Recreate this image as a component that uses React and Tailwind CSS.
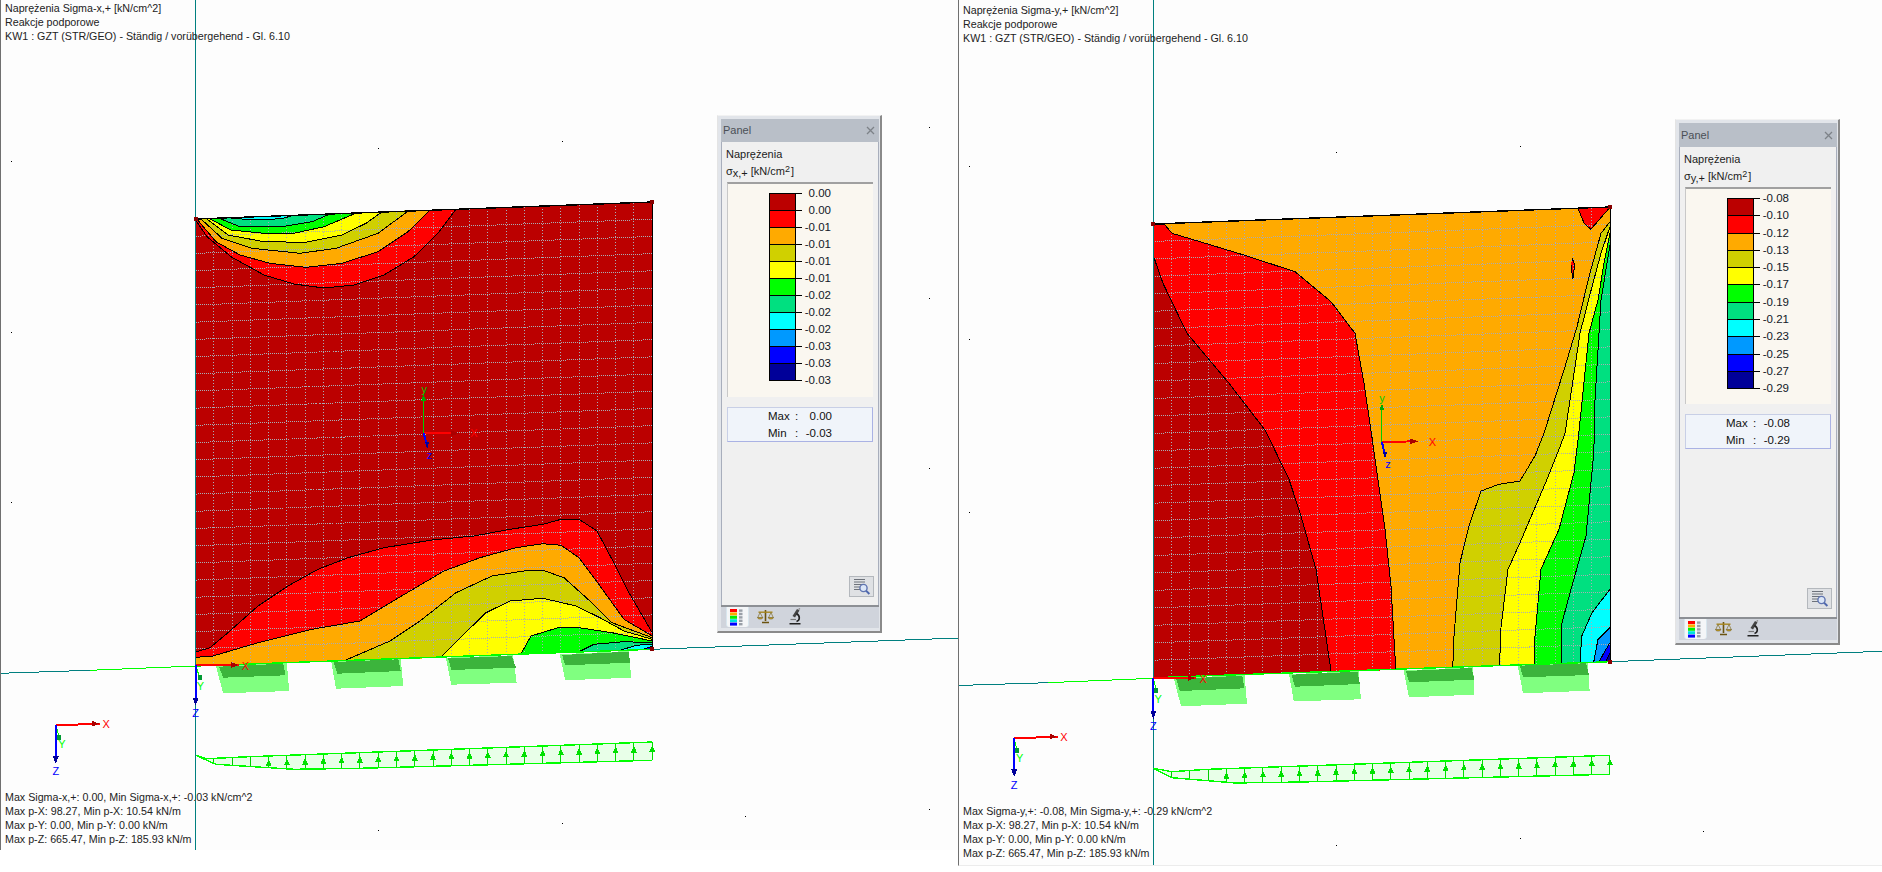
import React from "react";

const C = { dr: "#bb0000", r: "#ff0000", o: "#ffaa00", ol: "#d0d000", y: "#ffff00", g: "#00ff00", s: "#00e080", c: "#00ffff", a: "#0099ff", b: "#0000ff", n: "#000099" };
const H = 1308;
const low = (a) => a.map(([x, y]) => [x, y + H]);

const LEFT = {
  dx: 0,
  plate: [[326, 657], [1087, 606], [1087, 640 + H], [326, 690 + H]],
  base: C.dr,
  regions: [
    { f: C.r, pts: [[326, 660], [345, 710], [385, 770], [440, 825], [490, 852], [540, 864], [590, 855], [640, 825], [690, 770], [730, 700], [760, 628]] },
    { f: C.o, pts: [[328, 657], [360, 725], [400, 765], [450, 790], [510, 802], [570, 790], [630, 755], [680, 695], [716, 632]] },
    { f: C.ol, pts: [[335, 657], [370, 715], [420, 745], [500, 760], [560, 745], [630, 700], [682, 631]] },
    { f: C.y, pts: [[345, 657], [380, 705], [440, 725], [510, 727], [570, 705], [610, 670], [638, 634]] },
    { f: C.g, pts: [[350, 657], [385, 690], [440, 700], [490, 700], [540, 680], [595, 638]] },
    { f: C.s, pts: [[367, 656], [400, 680], [470, 680], [520, 665], [550, 642]] },
    { f: C.c, pts: [[385, 654], [420, 660], [470, 656], [490, 645]] },
    { f: C.r, close: [[1087, 640 + H], [326, 690 + H]], pts: low([[326, 648], [350, 635], [380, 590], [430, 510], [480, 450], [530, 400], [580, 365], [640, 335], [720, 312], [790, 300], [850, 280], [905, 265], [935, 250], [965, 250], [995, 285], [1020, 370], [1045, 460], [1087, 590]]) },
    { f: C.o, close: [[1087, 640 + H], [326, 690 + H]], pts: low([[326, 664], [355, 660], [430, 620], [520, 580], [600, 555], [660, 490], [740, 405], [800, 365], [860, 335], [905, 323], [935, 328], [965, 365], [1000, 450], [1040, 550], [1087, 600]]) },
    { f: C.ol, close: [[1087, 640 + H]], pts: low([[570, 677], [650, 615], [700, 555], [760, 470], [820, 420], [880, 403], [905, 403], [940, 425], [980, 490], [1020, 560], [1087, 605]]) },
    { f: C.y, close: [[1087, 640 + H]], pts: low([[735, 664], [770, 600], [810, 530], [850, 495], [905, 487], [960, 510], [1000, 545], [1040, 585], [1087, 610]]) },
    { f: C.g, close: [[1087, 640 + H]], pts: low([[868, 655], [885, 600], [930, 575], [965, 575], [1020, 590], [1087, 615]]) },
    { f: C.s, close: [[1087, 640 + H]], pts: low([[962, 650], [990, 625], [1040, 617], [1087, 620]]) },
    { f: C.c, close: [[1087, 640 + H]], pts: low([[1030, 645], [1060, 628], [1087, 624]]) },
    { f: C.b, close: [[1087, 640 + H]], pts: low([[1070, 642], [1087, 630]]) },
  ],
  boxes: low([
    [[360, 690], [478, 680], [482, 765], [372, 772], [365, 725]],
    [[552, 677], [668, 668], [672, 750], [560, 758]],
    [[743, 665], [855, 658], [861, 740], [752, 746]],
    [[933, 655], [1048, 645], [1052, 725], [942, 733]],
  ].flat()),
  boxSizes: [5, 4, 4, 4],
  tops: low([
    [[365, 692], [472, 683], [476, 718], [372, 725]],
    [[556, 678], [664, 670], [668, 705], [562, 713]],
    [[747, 667], [853, 660], [860, 695], [752, 702]],
    [[937, 657], [1048, 647], [1050, 680], [942, 688]],
  ].flat()),
  topSizes: [4, 4, 4, 4],
  strip: { top: [[326, 958], [345, 968], [415, 962], [1087, 918]], bot: [[326, 958], [360, 985], [490, 1000], [600, 997], [1087, 973]], arrowStart: 447 },
  dots: [[18, 484], [630, 444], [937, 424], [1549, 382], [1549, 895], [18, 997], [18, 198 + H], [1549, 97 + H], [1549, 1120 + H], [1242, 1140 + H], [937, 1162 + H], [630, 1183 + H]],
  center: [[706, 1300], [760, 1300], [706, 1197], [712, H + 30], [790, 1300], [707, 1167], [716, H + 58]],
  corner: { o: [326, H + 688], x: [392, H + 687], xl: [409, H + 690], y: [333, H + 725], yl: [334, H + 750], z: [326, H + 800], zl: [326, H + 832] },
  tri: { o: [93, H + 868], x: [160, H + 863], xl: [177, H + 863], y: [99, H + 905], yl: [103, H + 925], z: [93, H + 975], zl: [93, H + 1006] },
  teal: [[0, H + 712], [150, H + 703]],
  green: [[150, H + 703], [326, H + 690]],
  tealR: [[1087, H + 640], [1600, H + 606]],
  axisEnd: 850,
};

const RIGHT = {
  dx: 958,
  plate: [[354, 672], [1115, 621], [1115, 677 + H], [354, 725 + H]],
  base: C.o,
  regions: [
    { f: C.dr, close: [[354, 725 + H]], pts: [[354, 768], [370, 850], [410, 1000], [480, 1150], [540, 1290], [545, H], [580, H + 130], [600, H + 240], [625, H + 400], [650, H + 705]] },
  ],
  regionsUnder: [
    { f: C.r, close: [[354, 725 + H]], pts: [[354, 672], [372, 672], [385, 700], [450, 735], [510, 768], [590, 815], [650, 905], [690, 1000], [705, 1150], [718, H], [740, H + 280], [750, H + 450], [758, H + 702]] },
  ],
  regionsAfter: [
    { f: C.r, pts: [[1062, 627], [1072, 670], [1083, 688], [1115, 622]] },
    { f: C.r, pts: [[1052, 775], [1056, 795], [1053, 838], [1050, 795]] },
    { f: C.ol, close: [[1115, H + 677]], pts: [[1115, 665], [1100, 700], [1080, 830], [1060, 980], [1040, 1100], [1005, 1300], [990, H + 60], [965, H + 135], [930, H + 145], [900, H + 165], [880, H + 270], [865, H + 380], [855, H + 600], [853, H + 693]] },
    { f: C.y, close: [[1115, H + 677]], pts: [[1115, 680], [1100, 760], [1085, 860], [1065, 1000], [1040, 1300], [1030, H + 40], [1010, H + 130], [965, H + 320], [945, H + 400], [933, H + 580], [931, H + 689]] },
    { f: C.g, close: [[1115, H + 677]], pts: [[1115, 700], [1105, 790], [1095, 900], [1080, 1000], [1063, 1300], [1055, H + 110], [1030, H + 280], [1000, H + 400], [990, H + 600], [989, H + 685]] },
    { f: C.s, close: [[1115, H + 677]], pts: [[1115, 735], [1100, 900], [1090, 1200], [1088, H + 50], [1075, H + 300], [1050, H + 460], [1035, H + 560], [1034, H + 681]] },
    { f: C.c, close: [[1115, H + 677]], pts: [[1115, H + 460], [1085, H + 530], [1068, H + 600], [1065, H + 678]] },
    { f: C.a, close: [[1115, H + 677]], pts: [[1115, H + 575], [1095, H + 610], [1088, H + 677]] },
    { f: C.b, close: [[1115, H + 677]], pts: [[1115, H + 620], [1105, H + 650], [1097, H + 677]] },
    { f: C.n, close: [[1115, H + 677]], pts: [[1115, H + 650], [1108, H + 677]] },
  ],
  boxes: [
    [388, H + 727], [506, H + 717], [510, H + 803], [400, H + 811],
    [580, H + 715], [696, H + 705], [700, H + 790], [588, H + 796],
    [771, H + 703], [887, H + 694], [889, H + 776], [780, H + 784],
    [961, H + 687], [1078, H + 680], [1081, H + 764], [970, H + 772],
  ],
  boxSizes: [4, 4, 4, 4],
  tops: [
    [392, H + 729], [502, H + 719], [506, H + 757], [398, H + 765],
    [584, H + 716], [694, H + 707], [698, H + 744], [590, H + 752],
    [775, H + 705], [884, H + 696], [889, H + 731], [780, H + 739],
    [965, H + 689], [1075, H + 682], [1080, H + 717], [970, H + 724],
  ],
  topSizes: [4, 4, 4, 4],
  strip: { top: [[354, 997], [385, 1007], [445, 1000], [1115, 958]], bot: [[354, 997], [385, 1025], [490, 1041], [600, 1038], [1115, 1015]], arrowStart: 476 },
  dots: [[47, 497], [658, 457], [965, 437], [47, 1018], [47, H + 228], [1270, H + 1184], [965, H + 1206], [658, H + 1226]],
  center: [[735, H + 18], [790, H + 16], [735, 1225], [740, H + 60], [819, H + 18], [735, 1195], [745, H + 85]],
  corner: { o: [354, H + 726], x: [418, H + 726], xl: [437, H + 728], y: [359, H + 765], yl: [362, H + 788], z: [354, H + 840], zl: [354, H + 871] },
  tri: { o: [122, H + 907], x: [188, H + 902], xl: [205, H + 902], y: [127, H + 945], yl: [131, H + 965], z: [122, H + 1015], zl: [122, H + 1047] },
  teal: [[0, H + 750], [178, H + 740]],
  green: [[178, H + 740], [354, H + 727]],
  tealR: [[1115, H + 677], [1568, H + 646]],
  axisEnd: 866,
};

const chunks = (arr, sizes) => {
  let i = 0;
  return sizes.map((n) => {
    const part = arr.slice(i, i + n);
    i += n;
    return part;
  });
};

function Diagram({ d, h }) {
  const P = ([x, y]) => [x / 1.6667 + (d.dx ? 941 - d.dx : 0), y / 3];
  const S = (a) => a.map(P).map(([x, y]) => `${x.toFixed(1)},${y.toFixed(1)}`).join(" ");
  const [tl, tr, br, bl] = d.plate.map(P);
  const grid = [];
  for (let i = 1; i < 26; i++) {
    const t = i / 26;
    grid.push(<line key={"h" + i} x1={tl[0]} y1={tl[1] + (bl[1] - tl[1]) * t} x2={tr[0]} y2={tr[1] + (br[1] - tr[1]) * t} stroke="#a8acb4" strokeDasharray="1 1" strokeWidth="1" />);
  }
  for (let j = 1; j < 25; j++) {
    const t = j / 25;
    grid.push(<line key={"v" + j} x1={tl[0] + (tr[0] - tl[0]) * t} y1={tl[1] + (tr[1] - tl[1]) * t} x2={tl[0] + (tr[0] - tl[0]) * t} y2={bl[1] + (br[1] - bl[1]) * t} stroke="#a8acb8" strokeDasharray="1 2" strokeWidth="1" />);
  }
  const all = [...(d.regionsUnder || []), ...d.regions, ...(d.regionsAfter || [])];

  const interp = (line, x) => {
    for (let i = 1; i < line.length; i++) {
      if (x <= line[i][0]) {
        const [a, b] = [line[i - 1], line[i]];
        return a[1] + ((b[1] - a[1]) * (x - a[0])) / (b[0] - a[0]);
      }
    }
    return line[line.length - 1][1];
  };
  const st = d.strip;
  const x0 = st.top[0][0];
  const xe = st.top[st.top.length - 1][0];
  const topPts = low(st.top);
  const botPts = low(st.bot);
  const cols = [];
  for (let x = x0 + 30.44; x <= xe + 1; x += 30.44) cols.push(x);

  const Triad = ({ t }) => {
    const o = P(t.o), x = P(t.x), y = P(t.y), z = P(t.z), xl = P(t.xl), yl = P(t.yl), zl = P(t.zl);
    return (
      <g>
        <line x1={o[0]} y1={o[1]} x2={x[0] + 4} y2={x[1]} stroke="#ff0000" strokeWidth="2" />
        <polygon points={`${x[0] - 4},${x[1] - 3} ${x[0] + 3},${x[1]} ${x[0] - 4},${x[1] + 3}`} fill="#aa0000" />
        <line x1={o[0]} y1={o[1]} x2={y[0]} y2={y[1]} stroke="#00ff00" strokeWidth="1" />
        <polygon points={`${y[0] - 2},${y[1] - 3} ${y[0] + 2},${y[1] - 3} ${y[0] + 2},${y[1] + 2} ${y[0] - 2},${y[1] + 2}`} fill="#009933" />
        <line x1={o[0]} y1={o[1]} x2={z[0]} y2={z[1]} stroke="#0000ff" strokeWidth="2" />
        <polygon points={`${z[0] - 3},${z[1] - 5} ${z[0] + 3},${z[1] - 5} ${z[0]},${z[1] + 3}`} fill="#000099" />
        <text x={xl[0]} y={xl[1] + 4} fontSize="11" textAnchor="middle" fill="#ff0000" fontFamily="Liberation Sans, sans-serif">X</text>
        <text x={yl[0]} y={yl[1] + 4} fontSize="11" textAnchor="middle" fill="#00ff00" fontFamily="Liberation Sans, sans-serif">Y</text>
        <text x={zl[0]} y={zl[1] + 4} fontSize="11" textAnchor="middle" fill="#0000ff" fontFamily="Liberation Sans, sans-serif">Z</text>
      </g>
    );
  };
  const c = d.center.map(P);

  return (
    <svg className="block absolute -left-px top-0" width="958" height={h} shapeRendering="crispEdges">
      <polygon points={S(d.plate)} fill={d.base} />
      {all.map((r, i) => <polygon key={i} points={S([...r.pts, ...(r.close || [])])} fill={r.f} />)}
      {grid}
      {all.map((r, i) => <polyline key={i} points={S(r.pts)} fill="none" stroke="#000" strokeWidth="1" />)}
      {chunks(d.boxes, d.boxSizes).map((b, i) => <polygon key={i} points={S(b)} fill="#80ff80" />)}
      {chunks(d.tops, d.topSizes).map((b, i) => <polygon key={i} points={S(b)} fill="#3cb43c" />)}
      <polyline points={S([d.plate[0], d.plate[1]])} stroke="#000" strokeWidth="1.4" fill="none" />
      <polyline points={S([d.plate[0], d.plate[3]])} stroke="#000" fill="none" />
      <polyline points={S([d.plate[1], d.plate[2]])} stroke="#000" fill="none" />
      <polyline points={S([d.plate[3], d.plate[2]])} stroke="#00ff00" strokeWidth="1.4" fill="none" />
      <polyline points={S(d.teal)} stroke="#008080" fill="none" />
      <polyline points={S(d.green)} stroke="#00ff00" fill="none" />
      <polyline points={S(d.tealR)} stroke="#008080" fill="none" />
      <line x1={P(d.plate[0])[0]} y1="0" x2={P(d.plate[0])[0]} y2={d.axisEnd} stroke="#008080" />
      {/* load strip */}
      <polygon points={S([...topPts, ...[...botPts].reverse()])} fill="#e8ffe8" />
      {cols.map((x, i) => {
        const a = P([x, interp(st.top, x) + H]);
        const b = P([x, interp(st.bot, x) + H]);
        const arrow = x >= st.arrowStart - 1;
        return (
          <g key={i}>
            <line x1={a[0]} y1={a[1]} x2={a[0]} y2={b[1]} stroke={arrow ? "#00e000" : "#00cc00"} />
            {arrow && <polygon points={`${a[0]},${a[1] + 3} ${a[0] + 3},${a[1] + 10} ${a[0] - 3},${a[1] + 10}`} fill="#00e000" />}
          </g>
        );
      })}
      <polyline points={S(topPts)} stroke="#00ff00" strokeWidth="1.4" fill="none" />
      <polyline points={S(botPts)} stroke="#00ff00" strokeWidth="1.4" fill="none" />
      {/* center triad */}
      <line x1={c[0][0]} y1={c[0][1]} x2={c[2][0]} y2={c[2][1]} stroke="#00cc00" />
      <polygon points={`${c[2][0]},${c[2][1] - 5} ${c[2][0] + 2.5},${c[2][1] + 2} ${c[2][0] - 2.5},${c[2][1] + 2}`} fill="#00aa00" />
      <line x1={c[0][0]} y1={c[0][1]} x2={c[1][0]} y2={c[1][1]} stroke="#ff0000" strokeWidth="2" />
      <polygon points={`${c[1][0] - 5},${c[1][1] - 3} ${c[1][0] + 3},${c[1][1]} ${c[1][0] - 5},${c[1][1] + 3}`} fill="#aa0000" />
      <line x1={c[0][0]} y1={c[0][1]} x2={c[3][0]} y2={c[3][1]} stroke="#0000ff" strokeWidth="2" />
      <polygon points={`${c[3][0] - 2},${c[3][1] - 4} ${c[3][0] + 2},${c[3][1] - 4} ${c[3][0]},${c[3][1] + 3}`} fill="#000099" />
      <text x={c[4][0]} y={c[4][1] + 4} fontSize="11" textAnchor="middle" fill="#ff0000" fontFamily="Liberation Sans, sans-serif">X</text>
      <text x={c[5][0]} y={c[5][1] + 4} fontSize="11" textAnchor="middle" fill="#00cc00" fontFamily="Liberation Sans, sans-serif">y</text>
      <text x={c[6][0]} y={c[6][1] + 4} fontSize="11" textAnchor="middle" fill="#0000ff" fontFamily="Liberation Sans, sans-serif">z</text>
      <Triad t={d.corner} />
      <Triad t={d.tri} />
      {[d.plate[0], d.plate[1], d.plate[2]].map((n, i) => {
        const [x, y] = P(n);
        return <rect key={i} x={x - 2} y={y - 2} width="4" height="4" fill="#880000" />;
      })}
      {d.dots.map((n, i) => {
        const [x, y] = P(n);
        return <rect key={i} x={x} y={y} width="1" height="1" fill="#000" />;
      })}
    </svg>
  );
}

function LegendIcon() {
  return (
    <svg width="15" height="18" viewBox="0 0 15 18">
      {["#ff0000", "#ffaa00", "#00ee00", "#00e0e0", "#0000ff"].map((c, i) => (
        <g key={i}>
          <rect x="0" y={i * 3.4 + 1} width="7" height="3" fill={c} />
          <rect x="9" y={i * 3.4 + 1.4} width="3.5" height="2.4" fill="#9aa0a8" />
        </g>
      ))}
    </svg>
  );
}

function ScaleIcon() {
  return (
    <svg width="17" height="15" viewBox="0 0 17 15" fill="none">
      <path d="M8.5 1V12M5 13.5H12" stroke="#6b5310" strokeWidth="1.6" />
      <path d="M1.5 3.2H15.5" stroke="#a8861c" strokeWidth="1.4" />
      <path d="M3 3.5L0.8 8.5M3 3.5L5.6 8.5M14 3.5L11.6 8.5M14 3.5L16.2 8.5" stroke="#8a7a40" strokeWidth="0.8" />
      <path d="M0.5 8.5H5.8C5.6 10.6 0.8 10.6 0.5 8.5ZM11.2 8.5H16.5C16.2 10.6 11.5 10.6 11.2 8.5Z" fill="#c9a227" stroke="#5c4a10" strokeWidth="0.5" />
    </svg>
  );
}

function ScopeIcon() {
  return (
    <svg width="14" height="17" viewBox="0 0 14 17" fill="none">
      <path d="M9 1L11.5 2.5L7 9.5L4.5 8Z" fill="#444" />
      <path d="M10.5 1.5L12 0.5" stroke="#888" strokeWidth="1.4" />
      <path d="M8.5 5.5C12.5 8 12 12.5 8.5 13.5" stroke="#222" strokeWidth="1.6" />
      <path d="M1.5 15H12.5V16.5H1.5Z" fill="#222" />
      <path d="M2.5 11.5H8" stroke="#777" strokeWidth="1.2" />
    </svg>
  );
}

function ZoomIcon() {
  return (
    <svg width="18" height="18" viewBox="0 0 18 18" fill="none">
      <path d="M1 1.5H12M1 4H12M1 6.5H10M1 9H7M1 11.5H7" stroke="#6d727a" strokeWidth="1" />
      <circle cx="10.5" cy="10" r="3.6" fill="#dbe6f7" stroke="#5f74b0" strokeWidth="1.4" />
      <path d="M13 12.6L16.4 16" stroke="#4f68ae" strokeWidth="2" />
    </svg>
  );
}

function Panel({ p }) {
  const labelText = "text-[11px] leading-[17px] text-[#1c1c1c]";
  return (
    <div className={"absolute left-[716px] w-[165px] flex flex-col bg-[#e2e5ea] border-l border-t border-l-[#e4e4e4] border-t-[#f2f2f2] border-r-2 border-b-2 border-r-[#8a8a8a] border-b-[#8a8a8a] pt-[3px] pl-[3px] pr-[1px] pb-[3px] font-['Liberation_Sans',sans-serif] " + p.pos}>
      <div className={"flex items-center justify-between bg-[#b9bfc8] px-[2px] " + p.title}>
        <span className="text-[11px] text-[#4a4f56]">Panel</span>
        <svg width="9" height="9" viewBox="0 0 9 9" className="mr-[2px]" fill="none"><path d="M1 1L8 8M8 1L1 8" stroke="#7d8288" strokeWidth="1.3" /></svg>
      </div>
      <div className="flex-1 flex flex-col bg-[#f0f0f0] border-x border-[#a8aebc] pl-[4px] pr-[5px]">
        <div className={labelText + " mt-[4px]"}>Naprężenia</div>
        <div className={labelText + " flex items-baseline"}>
          <span>σ</span><span className="text-[11px] relative top-[2px]">{p.sub}</span>
          <span className="ml-[3px]">[kN/cm</span><span className="text-[9px] relative -top-[3px]">2</span><span className="ml-[1px]">]</span>
        </div>
        <div className={"ml-[1px] mt-[1px] bg-[#faf7f0] border-t-2 border-t-[#a0a0a0] border-l border-l-[#c8c8c8] w-[146px] pl-[41px] pt-[9px] flex flex-col " + p.box}>
          {p.labels.map((l, i) => (
            <div key={i} className={"flex items-start shrink-0 " + (i < 11 ? p.row : "h-px")}>
              <div className={"w-[27px] border-x border-t border-black " + (i < 11 ? "h-full" : "h-px") + " " + (p.swatch[i] || "")} />
              <div className="w-[6px] h-px bg-black" />
              <div className="w-[29px] -mt-[7px] text-right text-[11.5px] leading-[14px] text-[#111827]">{l}</div>
            </div>
          ))}
        </div>
        <div className="ml-[1px] mt-[10px] w-[146px] h-[35px] bg-[#f0f4fa] border border-[#c8cfe6] border-b-[#aab2e4] border-r-[#aab2e4] flex flex-col text-[11.5px] leading-[17px] text-[#111]">
          {[["Max", p.max], ["Min", p.min]].map(([a, b]) => (
            <div key={a} className="flex">
              <span className="ml-[40px] w-[27px]">{a}</span>
              <span className="w-[8px]">:</span>
              <span className="w-[29px] text-right">{b}</span>
            </div>
          ))}
        </div>
        <div className="mt-auto mb-[8px] self-end -mr-[1px] w-[25px] h-[21px] bg-[#dfe1e4] border border-[#b4b8bd] flex items-center justify-center">
          <ZoomIcon />
        </div>
      </div>
      <div className="h-[23px] shrink-0 bg-[#d0d4dc] border-t-2 border-t-[#8c8f94] flex items-start pl-[5px]">
        <div className="w-[23px] h-[20px] bg-[#f4f6f8] rounded-b-[3px] flex items-center justify-center border-x border-[#d8e6ee]"><LegendIcon /></div>
        <div className="ml-[8px] mt-[2px]"><ScaleIcon /></div>
        <div className="ml-[14px] mt-[1px]"><ScopeIcon /></div>
      </div>
    </div>
  );
}

const SW = [
  "bg-[#bb0000]", "bg-[#ff0000]", "bg-[#ffaa00]", "bg-[#d0d000]", "bg-[#ffff00]", "bg-[#00ff00]",
  "bg-[#00e080]", "bg-[#00ffff]", "bg-[#0099ff]", "bg-[#0000ff]", "bg-[#000099]",
];

const PL = {
  pos: "top-[115px] h-[518px]", title: "h-[23px]", box: "h-[215px]", row: "h-[17px]", swatch: SW,
  sub: "x,+", max: "0.00", min: "-0.03",
  labels: ["0.00", "0.00", "-0.01", "-0.01", "-0.01", "-0.01", "-0.02", "-0.02", "-0.02", "-0.03", "-0.03", "-0.03"],
};
const PR = {
  pos: "top-[119px] h-[526px]", title: "h-[24px]", box: "h-[217px]", row: "h-[17.3px]", swatch: SW,
  sub: "y,+", max: "-0.08", min: "-0.29",
  labels: ["-0.08", "-0.10", "-0.12", "-0.13", "-0.15", "-0.17", "-0.19", "-0.21", "-0.23", "-0.25", "-0.27", "-0.29"],
};

function View({ d, panel, top, bottom, cls, h }) {
  return (
    <div className={"relative shrink-0 bg-[#fdfdfd] border-l border-[#707070] overflow-hidden font-['Liberation_Sans',sans-serif] " + cls}>
      <Diagram d={d} h={h} />
      <div className={"absolute left-[4px] text-[10.7px] leading-[14px] text-[#222] whitespace-nowrap " + top.pos}>
        {top.lines.map((l) => <div key={l}>{l}</div>)}
      </div>
      <div className={"absolute left-[4px] text-[10.7px] leading-[14px] text-[#222] whitespace-nowrap " + bottom.pos}>
        {bottom.lines.map((l) => <div key={l}>{l}</div>)}
      </div>
      <Panel p={panel} />
    </div>
  );
}

export default function App() {
  return (
    <div className="w-[1882px] h-[872px] bg-white flex items-start overflow-hidden">
      <View
        d={LEFT}
        panel={PL}
        h={850}
        cls="w-[958px] h-[850px]"
        top={{ pos: "top-[1px]", lines: ["Naprężenia Sigma-x,+ [kN/cm^2]", "Reakcje podporowe", "KW1 : GZT (STR/GEO) - Ständig / vorübergehend - Gl. 6.10"] }}
        bottom={{ pos: "top-[790px]", lines: ["Max Sigma-x,+: 0.00, Min Sigma-x,+: -0.03 kN/cm^2", "Max p-X: 98.27, Min p-X: 10.54 kN/m", "Max p-Y: 0.00, Min p-Y: 0.00 kN/m", "Max p-Z: 665.47, Min p-Z: 185.93 kN/m"] }}
      />
      <View
        d={RIGHT}
        panel={PR}
        h={866}
        cls="w-[924px] h-[866px] border-b border-b-[#ececec]"
        top={{ pos: "top-[3px]", lines: ["Naprężenia Sigma-y,+ [kN/cm^2]", "Reakcje podporowe", "KW1 : GZT (STR/GEO) - Ständig / vorübergehend - Gl. 6.10"] }}
        bottom={{ pos: "top-[804px]", lines: ["Max Sigma-y,+: -0.08, Min Sigma-y,+: -0.29 kN/cm^2", "Max p-X: 98.27, Min p-X: 10.54 kN/m", "Max p-Y: 0.00, Min p-Y: 0.00 kN/m", "Max p-Z: 665.47, Min p-Z: 185.93 kN/m"] }}
      />
    </div>
  );
}
